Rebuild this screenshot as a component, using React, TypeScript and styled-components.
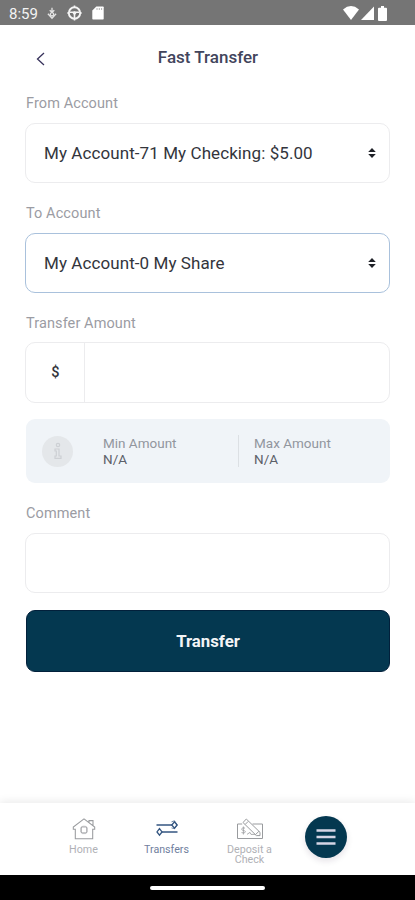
import React from "react";
import styled, { createGlobalStyle } from "styled-components";

const GlobalStyle = createGlobalStyle`
  * { box-sizing: border-box; }
  body { margin: 0; background: #fff; font-family: Roboto, "Liberation Sans", sans-serif; }
  button { font-family: inherit; border: 0; padding: 0; background: none; }
`;

const Screen = styled.div`
  width: 415px;
  height: 900px;
  display: flex;
  flex-direction: column;
  background: #fff;
  overflow: hidden;
`;

const StatusBar = styled.div`
  height: 25px;
  flex: none;
  display: flex;
  align-items: center;
  justify-content: space-between;
  padding: 1px 28px 0 9px;
  background: #757575;
  color: #f3f3f3;
`;

const StatusGroup = styled.div<{ $gap: number }>`
  display: flex;
  align-items: center;
  gap: ${(p) => p.$gap}px;
`;

const Clock = styled.span`
  width: 28px;
  font-size: 15px;
  line-height: 20px;
  white-space: nowrap;
  padding-top: 1px;
`;

const Header = styled.header`
  height: 68px;
  flex: none;
  display: grid;
  grid-template-columns: 50px 1fr 50px;
  align-items: center;
  padding: 0 7px 4px 7px;
`;

const BackButton = styled.button`
  display: flex;
  justify-content: flex-end;
  padding: 4px 12px 0 0;
`;

const Title = styled.h1`
  margin: 0;
  padding-left: 1px;
  text-align: center;
  font-size: 17px;
  line-height: 20px;
  font-weight: 500;
  color: #42455c;
`;

const Form = styled.main`
  flex: 1;
  display: flex;
  flex-direction: column;
  padding: 0 25px;
`;

const Label = styled.label`
  height: 20px;
  margin-bottom: 10px;
  padding: 1px 0 0 1px;
  font-size: 14.5px;
  line-height: 20px;
  letter-spacing: 0.1px;
  color: #9b9ca3;
`;

const Field = styled.div<{ $focused?: boolean }>`
  height: 60px;
  margin-bottom: 20px;
  display: flex;
  align-items: center;
  justify-content: space-between;
  padding: 0 12px 1px 18px;
  border: 1px solid ${(p) => (p.$focused ? "#a9c1dc" : "#ececee")};
  border-radius: 10px;
  color: #33353c;
  font-size: 17px;
  letter-spacing: 0.08px;
  line-height: 20px;
`;

const AmountField = styled(Field)`
  height: 61px;
  margin: -1px 0 16px;
  padding: 0;
  justify-content: flex-start;
`;

const CommentField = styled(Field)`
  margin-bottom: 17px;
`;

const Currency = styled.span`
  width: 59px;
  height: 100%;
  display: flex;
  align-items: center;
  justify-content: center;
  padding-left: 1px;
  border-right: 1px solid #ececee;
  font-size: 14.5px;
  font-weight: 500;
`;

const Limits = styled.section`
  height: 64px;
  margin: 0 0 20px 1px;
  display: grid;
  grid-template-columns: 46px 136px 1fr;
  align-items: center;
  padding-left: 16px;
  gap: 15px;
  border-radius: 9px;
  background: #f0f4f8;
`;

const InfoBadge = styled.span`
  width: 31px;
  height: 31px;
  display: flex;
  align-items: center;
  justify-content: center;
  border-radius: 50%;
  background: #e4e7ea;
`;

const Limit = styled.div<{ $divided?: boolean }>`
  height: 32px;
  border-right: ${(p) => (p.$divided ? "1px solid #dce0e4" : "0")};
  font-size: 13.5px;
  line-height: 16px;
  color: #92969e;
`;

const LimitValue = styled.div`
  font-size: 13.5px;
  color: #5c6069;
`;

const Submit = styled.button`
  height: 62px;
  margin-left: 1px;
  border: 1px solid #02203b;
  border-radius: 9px;
  background: #043850;
  color: #f3f4f6;
  font-size: 16.8px;
  font-weight: 700;
`;

const Nav = styled.nav`
  height: 72px;
  flex: none;
  display: grid;
  grid-template-columns: 83px 83px 83px 71px;
  justify-content: center;
  padding-right: 11px;
  background: #fff;
  box-shadow: 0 -2px 8px rgba(0, 0, 0, 0.08);
`;

const NavItem = styled.button<{ $active?: boolean }>`
  display: flex;
  flex-direction: column;
  align-items: center;
  padding-top: 15px;
  color: ${(p) => (p.$active ? "#345681" : "#999b9e")};
`;

const NavLabel = styled.span<{ $active?: boolean }>`
  width: 56px;
  margin-top: 5px;
  font-size: 10.7px;
  line-height: 10px;
  color: ${(p) => (p.$active ? "#70809e" : "#b0b1b6")};
`;

const MenuButton = styled.button`
  width: 42px;
  height: 42px;
  margin: 13px 0 0 14px;
  display: flex;
  align-items: center;
  justify-content: center;
  border-radius: 50%;
  background: #043850;
  box-shadow: 0 3px 6px rgba(40, 20, 60, 0.12);
`;

const SystemBar = styled.footer`
  height: 25px;
  flex: none;
  display: flex;
  align-items: center;
  justify-content: center;
  background: #000;
`;

const HomeHandle = styled.span`
  width: 115px;
  height: 4px;
  border-radius: 2px;
  background: #fff;
`;

const SortArrows = () => (
  <svg width="10" height="12" viewBox="0 0 10 12" fill="#202228">
    <path d="M5 1 8.8 5H1.2ZM5 11 1.2 7H8.8Z" />
  </svg>
);

const VoiceIcon = () => (
  <svg width="10" height="13" viewBox="0 0 10 13" fill="none" stroke="#e4e4e4" strokeWidth="1.3">
    <path d="M5 .8v3.7M2.7 3.2 5 5.3l2.3-2.1M.9 6.8 5 11.2l4.1-4.4" />
    <circle cx="5" cy="7.3" r="1.7" />
  </svg>
);

const WheelIcon = () => (
  <svg width="15" height="16" viewBox="0 0 15 16" fill="none" stroke="#f5f5f5">
    <circle cx="7.5" cy="8" r="5.7" strokeWidth="1.9" />
    <path d="M3 7.3h9M7.5 8v5M7.5 .5v2M7.5 13.5v2M.3 8h2M12.7 8h2" strokeWidth="1.6" />
    <circle cx="7.5" cy="8" r="1.3" fill="#f5f5f5" />
  </svg>
);

const CardIcon = () => (
  <svg width="12" height="14" viewBox="0 0 12 14">
    <path d="M4.3.5H11q.7 0 .7.8v11.4q0 .8-.7.8H1q-.7 0-.7-.8V4.5Z" fill="#fff" />
    <path d="M5 2v2M7.3 2v2M9.6 2v2" stroke="#a9a9a9" strokeWidth=".9" />
  </svg>
);

const WifiIcon = () => (
  <svg width="16" height="14" viewBox="0 0 16 14" fill="#fff">
    <path d="M8 14 0 3.4Q8-3.4 16 3.4Z" />
  </svg>
);

const SignalIcon = () => (
  <svg width="13" height="14" viewBox="0 0 13 14" fill="#fff">
    <path d="M13 .5V14H0Z" />
  </svg>
);

const BatteryIcon = () => (
  <svg width="9" height="15" viewBox="0 0 9 15" fill="#fff">
    <path d="M3 0h3v1.7h2q1 0 1 1V14q0 1-1 1H1q-1 0-1-1V2.7q0-1 1-1h2Z" />
  </svg>
);

const InfoIcon = () => (
  <svg width="8" height="18" viewBox="0 0 8 18" stroke="#cdd0d4" fill="none" strokeWidth="1.2">
    <circle cx="4" cy="3" r="1.7" />
    <path d="M1 7h4v7h2v2.3H1V14h1.3V9H1Z" />
  </svg>
);

const HomeIcon = () => (
  <svg width="24" height="22" viewBox="0 0 24 22" fill="none" stroke="currentColor" strokeWidth="1.05">
    <path d="M1.3 11.2V9L12 .9 22.7 9v2.2h-2v9.5H3.3v-9.5ZM17 4.4V2.6h4v5" />
    <path d="M9.3 9h5.4v5.8H9.3Z" strokeWidth=".8" />
    <path d="M10.5 8.2h3l1.8 1.8v3.8l-1.8 1.8h-3l-1.8-1.8V10Z" strokeWidth=".5" />
  </svg>
);

const TransfersIcon = () => (
  <svg width="24" height="22" viewBox="0 0 24 22" fill="none" stroke="currentColor" strokeWidth="1.3">
    <path d="M1.5 7h15.8M6.8 14h15.7" />
    <path d="m19.5 3.8 2.6 3.2-2.6 3.2L16.8 7ZM4.5 10.6 7 13.9l-2.5 3.3L2 13.9Z" />
    <path d="m16.5 3.8 3-1 2.8 4.2-2.8 3.7-3-.8" strokeWidth=".7" />
  </svg>
);

const CheckIcon = () => (
  <svg width="28" height="22" viewBox="0 0 28 22" fill="none" stroke="currentColor" strokeWidth="1">
    <path d="M6.2 6H1.5v14.5h25V6h-10M7 4.5 10.3 1 24 14.3v3.3h-3.6L7 4.5ZM9.2 6.4l3-3M19.3 16.8l3.6-3.5" />
    <path d="M9 10.1c-4-1-4.3 2.1-1.5 2.4 3 .3 2.3 3.4-2 2.1M7.4 8.5v8M11 16.4l3-2 1 2h4" strokeWidth=".8" />
  </svg>
);

const accounts = [
  { label: "From Account", value: "My Account-71 My Checking: $5.00", focused: false },
  { label: "To Account", value: "My Account-0 My Share", focused: true },
];

const tabs = [
  { label: "Home", Icon: HomeIcon, active: false },
  { label: "Transfers", Icon: TransfersIcon, active: true },
  { label: "Deposit a Check", Icon: CheckIcon, active: false },
];

export default function App() {
  return (
    <Screen>
      <GlobalStyle />
      <StatusBar>
        <StatusGroup $gap={10}>
          <Clock>8:59</Clock>
          <VoiceIcon />
          <WheelIcon />
          <CardIcon />
        </StatusGroup>
        <StatusGroup $gap={2}>
          <WifiIcon />
          <SignalIcon />
          <span />
          <BatteryIcon />
        </StatusGroup>
      </StatusBar>
      <Header>
        <BackButton aria-label="Back">
          <svg width="9" height="14" viewBox="0 0 9 14" fill="none" stroke="#37325b" strokeWidth="1.3">
            <path d="M8 1 1.5 7 8 13" />
          </svg>
        </BackButton>
        <Title>Fast Transfer</Title>
      </Header>
      <Form>
        {accounts.map((a) => (
          <React.Fragment key={a.label}>
            <Label>{a.label}</Label>
            <Field $focused={a.focused}>
              {a.value}
              <SortArrows />
            </Field>
          </React.Fragment>
        ))}
        <Label>Transfer Amount</Label>
        <AmountField>
          <Currency>$</Currency>
        </AmountField>
        <Limits>
          <InfoBadge>
            <InfoIcon />
          </InfoBadge>
          <Limit $divided>
            Min Amount
            <LimitValue>N/A</LimitValue>
          </Limit>
          <Limit>
            Max Amount
            <LimitValue>N/A</LimitValue>
          </Limit>
        </Limits>
        <Label>Comment</Label>
        <CommentField />
        <Submit>Transfer</Submit>
      </Form>
      <Nav>
        {tabs.map(({ label, Icon, active }) => (
          <NavItem key={label} $active={active}>
            <Icon />
            <NavLabel $active={active}>{label}</NavLabel>
          </NavItem>
        ))}
        <MenuButton aria-label="Menu">
          <svg width="20" height="18" viewBox="0 0 20 18" stroke="#d5d5e5" strokeWidth="2.4">
            <path d="M.5 2.5h19M.5 9h19M.5 15.5h19" />
          </svg>
        </MenuButton>
      </Nav>
      <SystemBar>
        <HomeHandle />
      </SystemBar>
    </Screen>
  );
}
